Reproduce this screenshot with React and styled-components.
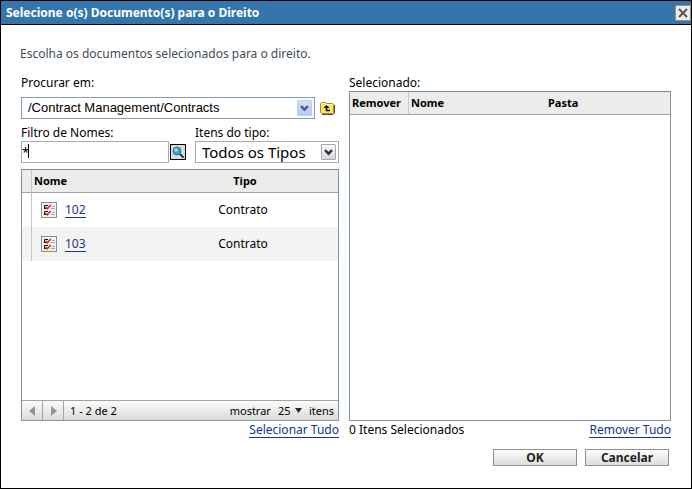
import React, { useState } from "react";
import styled, { createGlobalStyle } from "styled-components";

const GlobalStyle = createGlobalStyle`
  * {
    box-sizing: border-box;
  }
  body {
    margin: 0;
    background: #fff;
    color: #000;
    font-family: "Noto Sans", "Open Sans", sans-serif;
    font-size: 12px;
    line-height: 16px;
  }
  button, input, select {
    font: inherit;
    color: inherit;
    margin: 0;
  }
`;

const Dialog = styled.div`
  display: flex;
  flex-direction: column;
  min-height: 100vh;
  border: 1px solid #000;
`;

const TitleBar = styled.header`
  display: flex;
  align-items: center;
  justify-content: space-between;
  height: 24px;
  padding-left: 5px;
  border-bottom: 1px solid #000;
  background: #3476ac;
`;

const Title = styled.h1`
  margin: 0;
  color: #fff;
  font-size: 12px;
  font-weight: 700;
`;

const CloseButton = styled.button`
  display: flex;
  align-items: center;
  justify-content: center;
  width: 16px;
  height: 16px;
  padding: 0;
  border: 1px solid #8f8f8a;
  background: #ecece8;
`;

const Content = styled.main`
  flex: 1;
  display: flex;
  flex-direction: column;
  padding: 21px 20px 22px 20px;
`;

const Intro = styled.p`
  margin: 0 0 0 -1px;
  padding-bottom: 13px;
  color: #3c4d59;
`;

const Columns = styled.div`
  flex: 1;
  display: grid;
  grid-template-columns: minmax(0, 318fr) minmax(0, 322fr);
  column-gap: 10px;
`;

const Column = styled.section`
  display: flex;
  flex-direction: column;
`;

const Label = styled.label`
  height: 16px;
`;

const PathRow = styled.div`
  display: flex;
  align-items: center;
  gap: 5px;
  padding-right: 4px;
  margin: 6px 0;
`;

const FilterRow = styled.div`
  display: grid;
  grid-template-columns: minmax(0, 165fr) minmax(0, 144fr);
  column-gap: 9px;
  margin-bottom: 6px;
`;

const Field = styled.div`
  display: flex;
  flex-direction: column;
`;

const SearchBox = styled.div`
  position: relative;
  display: flex;
  align-items: center;
  gap: 1px;
`;

const TextInput = styled.input`
  flex: 1;
  min-width: 0;
  height: 22px;
  padding: 0;
  border: 1px solid #a5acb2;
  border-radius: 0;
  background: #fff;
  font-size: 13px;
  outline: none;
`;

const Caret = styled.span`
  position: absolute;
  left: 7px;
  top: 3px;
  width: 1px;
  height: 14px;
  background: #000;
`;

const IconButton = styled.button`
  display: flex;
  padding: 0;
  border: ${(props) => (props.$framed ? "1px solid #000" : "none")};
  background: ${(props) => (props.$framed ? "#dcdcd8" : "none")};
`;

const SelectWrap = styled.div`
  position: relative;
  flex: 1;
`;

const Select = styled.select`
  display: block;
  appearance: none;
  width: 100%;
  height: 22px;
  padding: 0 20px 0 6px;
  border: 1px solid ${(props) => (props.$blue ? "#7f9db9" : "#a5acb2")};
  border-radius: 0;
  background: #fff;
  font-family: ${(props) =>
    props.$blue ? '"Liberation Sans", sans-serif' : "inherit"};
  font-size: ${(props) => (props.$blue ? "13px" : "15px")};
  line-height: 20px;
`;

const Arrow = styled.span`
  position: absolute;
  top: 3px;
  right: 3px;
  display: flex;
  align-items: center;
  justify-content: center;
  width: 15px;
  height: 16px;
  border-radius: 1px;
  pointer-events: none;
  color: ${(props) => (props.$blue ? "#4d6185" : "#333")};
  border: 1px solid ${(props) => (props.$blue ? "#b9cdf8" : "#a9a9b4")};
  background: ${(props) =>
    props.$blue
      ? "linear-gradient(#d2e0fd, #b4c9f6)"
      : "linear-gradient(#fff, #d4d4de)"};
`;

const Panel = styled.div`
  flex: 1;
  display: flex;
  flex-direction: column;
  border: 1px solid #7d97a8;
  border-top-color: #74899a;
`;

const ListArea = styled.div`
  flex: 1;
`;

const Table = styled.table`
  width: 100%;
  table-layout: fixed;
  border-collapse: separate;
  border-spacing: 0;
`;

const Th = styled.th`
  width: ${(props) => props.$width || "auto"};
  height: 23px;
  padding: 0 2px;
  border-bottom: 1px solid #a5a5a0;
  border-right: ${(props) => (props.$rule ? "1px solid #c8c8c6" : "none")};
  background: #ececea;
  font-size: 11px;
  font-weight: 700;
  text-align: ${(props) => (props.$center ? "center" : "left")};
`;

const Row = styled.tr`
  background: ${(props) => (props.$shaded ? "#f3f3f3" : "#fff")};
`;

const Td = styled.td`
  height: 34px;
  padding: 0 ${(props) => (props.$center ? "4px" : "0")} 0
    ${(props) => (props.$item ? "9px" : "0")};
  border-right: ${(props) => (props.$rule ? "1px solid #c8c8c6" : "none")};
  text-align: ${(props) => (props.$center ? "center" : "left")};
`;

const ItemCell = styled.div`
  display: flex;
  align-items: center;
  gap: 8px;
`;

const Link = styled.a`
  color: #14358c;
  text-decoration: none;
  border-bottom: 1px solid #14358c;
  line-height: 14px;
`;

const Pager = styled.footer`
  display: flex;
  align-items: stretch;
  height: 20px;
  border-top: 1px solid #a5a5a0;
  background: linear-gradient(#fbfbfb, #dbdcd8);
  font-size: 11px;
  line-height: 19px;
`;

const PageButton = styled.button`
  display: flex;
  align-items: center;
  justify-content: center;
  width: 21px;
  padding: 0;
  border: none;
  border-right: 1px solid #a5a5a0;
  background: none;
`;

const Range = styled.span`
  flex: 1;
  padding-left: 6px;
`;

const PageSize = styled.label`
  display: flex;
  gap: 7px;
  padding-right: 4px;
`;

const SizeWrap = styled.span`
  position: relative;
  display: flex;
  align-items: center;
  width: 24px;
`;

const SizeSelect = styled.select`
  appearance: none;
  width: 100%;
  height: 19px;
  padding: 0;
  border: none;
  background: none;
`;

const SizeArrow = styled.svg`
  position: absolute;
  right: 0;
  top: 7px;
  pointer-events: none;
`;

const Under = styled.div`
  display: flex;
  align-items: flex-start;
  justify-content: ${(props) => (props.$end ? "flex-end" : "space-between")};
  padding-top: 2px;
  height: 18px;
  line-height: 14px;
`;

const Actions = styled.div`
  display: flex;
  justify-content: flex-end;
  gap: 8px;
  padding: 10px 2px 0 0;
`;

const ActionButton = styled.button`
  width: 84px;
  height: 17px;
  padding: 0;
  border: 1px solid #8f8f8c;
  background: linear-gradient(#fcfcfc, #dddedb);
  color: #222;
  font-weight: 700;
  line-height: 15px;
`;

const Chevron = () => (
  <svg width="9" height="7" viewBox="0 0 9 7" aria-hidden="true">
    <path d="M1 1.2 4.5 4.7 8 1.2" fill="none" stroke="currentColor" strokeWidth="2.4" />
  </svg>
);

const CloseIcon = () => (
  <svg width="12" height="12" viewBox="0 0 12 12" aria-hidden="true">
    <path d="M2 2 10 10M10 2 2 10" stroke="#555" strokeWidth="2" />
  </svg>
);

const FolderUpIcon = () => (
  <svg width="15" height="14" viewBox="0 0 15 14" aria-hidden="true">
    <path
      d="M.5 11.5V2.5L1.5 1.5H5.5L6.5 2.5H12.5L13.5 3.5V11.5L12.5 12.5H1.5Z"
      fill="#f6e468"
      stroke="#a38f2c"
    />
    <path d="M1.5 4V3L2 2.5H5L6 3.5H12.5" fill="none" stroke="#fff9c4" />
    <path d="M14.5 4V12L13 13.5H2" fill="none" stroke="#3b4a63" />
    <path d="M6.5 6V9.5H10" fill="none" stroke="#111" strokeWidth="1.4" />
    <path d="M3.5 7 6.5 4 9.5 7Z" fill="#111" />
  </svg>
);

const SearchIcon = () => (
  <svg width="14" height="14" viewBox="0 0 14 14" aria-hidden="true">
    <path d="M8.6 8.6 12.6 12.6" stroke="#1c2c3c" strokeWidth="2" />
    <circle cx="6" cy="6" r="4" fill="#3aa0d8" stroke="#3c6f9c" />
    <circle cx="5" cy="5" r="1.6" fill="#b5e6fa" />
  </svg>
);

const ChecklistIcon = () => (
  <svg width="16" height="16" viewBox="0 0 16 16" aria-hidden="true">
    <rect x=".5" y=".5" width="15" height="15" fill="#f2f2f0" stroke="#8c8c8c" />
    <path d="M7 3.5H3.5V7M7 9.5H3.5V13" fill="none" stroke="#111" />
    <path d="M3 6.5H5M3 12.5H5" stroke="#111" />
    <path d="M11 4.5H14M10 6.5H14M11 10.5H14M10 12.5H14" stroke="#a2a8b0" />
    <path d="M4.6 5 6.2 6.8 9.8 3M4.6 11 6.2 12.8 9.8 9" fill="none" stroke="#d42a18" strokeWidth="1.5" />
  </svg>
);

const Triangle = ({ left }) => (
  <svg width="7" height="10" viewBox="0 0 7 10" aria-hidden="true">
    <path d={left ? "M6 0V10L0 5Z" : "M1 0V10L7 5Z"} fill="#929692" />
  </svg>
);

const documents = [
  { name: "102", type: "Contrato" },
  { name: "103", type: "Contrato" },
];

function App() {
  const [filter, setFilter] = useState("*");

  return (
    <Dialog>
      <GlobalStyle />
      <TitleBar>
        <Title>Selecione o(s) Documento(s) para o Direito</Title>
        <CloseButton type="button" aria-label="Fechar">
          <CloseIcon />
        </CloseButton>
      </TitleBar>

      <Content>
        <Intro>Escolha os documentos selecionados para o direito.</Intro>

        <Columns>
          <Column>
            <Label htmlFor="path">Procurar em:</Label>
            <PathRow>
              <SelectWrap>
                <Select id="path" $blue>
                  <option>/Contract Management/Contracts</option>
                </Select>
                <Arrow $blue>
                  <Chevron />
                </Arrow>
              </SelectWrap>
              <IconButton type="button" aria-label="Pasta acima">
                <FolderUpIcon />
              </IconButton>
            </PathRow>

            <FilterRow>
              <Field>
                <Label htmlFor="filter">Filtro de Nomes:</Label>
                <SearchBox>
                  <TextInput
                    id="filter"
                    type="text"
                    value={filter}
                    onChange={(e) => setFilter(e.target.value)}
                  />
                  {filter === "*" && <Caret />}
                  <IconButton type="button" $framed aria-label="Buscar">
                    <SearchIcon />
                  </IconButton>
                </SearchBox>
              </Field>
              <Field>
                <Label htmlFor="type">Itens do tipo:</Label>
                <SelectWrap>
                  <Select id="type">
                    <option>Todos os Tipos</option>
                  </Select>
                  <Arrow>
                    <Chevron />
                  </Arrow>
                </SelectWrap>
              </Field>
            </FilterRow>

            <Panel>
              <ListArea>
                <Table>
                  <thead>
                    <tr>
                      <Th $width="10px" $rule />
                      <Th>Nome</Th>
                      <Th $width="186px" $center>Tipo</Th>
                    </tr>
                  </thead>
                  <tbody>
                    {documents.map((doc, index) => (
                      <Row key={doc.name} $shaded={index % 2 === 1}>
                        <Td $rule />
                        <Td $item>
                          <ItemCell>
                            <ChecklistIcon />
                            <Link href="#">{doc.name}</Link>
                          </ItemCell>
                        </Td>
                        <Td $center>{doc.type}</Td>
                      </Row>
                    ))}
                  </tbody>
                </Table>
              </ListArea>
              <Pager>
                <PageButton type="button" aria-label="Anterior">
                  <Triangle left />
                </PageButton>
                <PageButton type="button" aria-label="Próxima">
                  <Triangle />
                </PageButton>
                <Range>1 - 2 de 2</Range>
                <PageSize>
                  mostrar
                  <SizeWrap>
                    <SizeSelect>
                      <option>25</option>
                    </SizeSelect>
                    <SizeArrow width="7" height="5" viewBox="0 0 7 5">
                      <path d="M0 0H7L3.5 5Z" fill="#2b2b10" />
                    </SizeArrow>
                  </SizeWrap>
                  itens
                </PageSize>
              </Pager>
            </Panel>
            <Under $end>
              <Link href="#">Selecionar Tudo</Link>
            </Under>
          </Column>

          <Column>
            <Label as="div">Selecionado:</Label>
            <Panel>
              <Table>
                <thead>
                  <tr>
                    <Th $width="59px" $rule>Remover</Th>
                    <Th>Nome</Th>
                    <Th $width="124px">Pasta</Th>
                  </tr>
                </thead>
              </Table>
            </Panel>
            <Under>
              <span>0 Itens Selecionados</span>
              <Link href="#">Remover Tudo</Link>
            </Under>
          </Column>
        </Columns>

        <Actions>
          <ActionButton type="button">OK</ActionButton>
          <ActionButton type="button">Cancelar</ActionButton>
        </Actions>
      </Content>
    </Dialog>
  );
}

export default App;
